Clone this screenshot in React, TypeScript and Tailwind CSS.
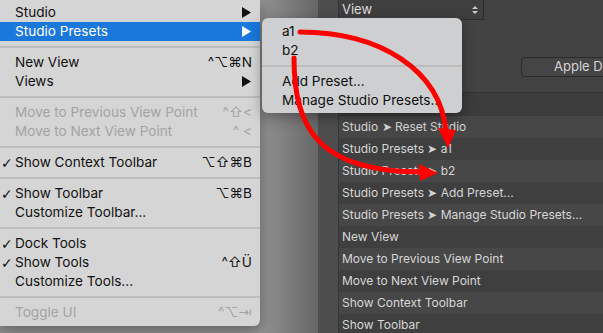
import React from 'react';

type Item =
  | { sep: true }
  | { sep?: false; label: string; shortcut?: string; sub?: boolean; check?: boolean; disabled?: boolean; active?: boolean };

const menuItems: Item[] = [
  { label: 'Studio', sub: true },
  { label: 'Studio Presets', sub: true, active: true },
  { sep: true },
  { label: 'New View', shortcut: '^⌥⌘N' },
  { label: 'Views', sub: true },
  { sep: true },
  { label: 'Move to Previous View Point', shortcut: '^⇧<', disabled: true },
  { label: 'Move to Next View Point', shortcut: '^ <', disabled: true },
  { sep: true },
  { label: 'Show Context Toolbar', shortcut: '⌥⇧⌘B', check: true },
  { sep: true },
  { label: 'Show Toolbar', shortcut: '⌥⌘B', check: true },
  { label: 'Customize Toolbar...' },
  { sep: true },
  { label: 'Dock Tools', check: true },
  { label: 'Show Tools', shortcut: '^⇧Ü', check: true },
  { label: 'Customize Tools...' },
  { sep: true },
  { label: 'Toggle UI', shortcut: '^⌥⇥', disabled: true },
];

const listRows = [
  'Studio ➤ Reset Studio',
  'Studio Presets ➤ a1',
  'Studio Presets ➤ b2',
  'Studio Presets ➤ Add Preset...',
  'Studio Presets ➤ Manage Studio Presets...',
  'New View',
  'Move to Previous View Point',
  'Move to Next View Point',
  'Show Context Toolbar',
  'Show Toolbar',
];

function SubArrow({ white }: { white?: boolean }) {
  return (
    <svg width="9" height="11" viewBox="0 0 9 11" className="mr-[9px]">
      <path d="M0 0 L9 5.5 L0 11 Z" fill={white ? '#ffffff' : '#111111'} />
    </svg>
  );
}

function Separator() {
  return (
    <div className="h-3 flex items-center">
      <div className="w-full h-[2px] bg-[#bdbdbd]" />
    </div>
  );
}

export default function App() {
  return (
    <div className="relative w-[603px] h-[333px] overflow-hidden flex font-['Inter',sans-serif]">
      {/* background app */}
      <div className="w-[318px] shrink-0 h-full bg-[linear-gradient(to_right,#929292_82%,#666666)]" />
      <div className="w-[20px] shrink-0 h-full bg-[#4d4d4d]" />
      <div className="flex-1 min-w-0 h-full flex flex-col overflow-hidden bg-[#434343] border-l border-[#353535]">
        <div className="h-[93px] shrink-0 flex flex-col border-b border-[#343434]">
          <div className="w-[145px] h-5 flex items-center justify-between pl-[3px] pr-[5px] bg-[#3f3f3f] border-r border-b border-[#2c2c2c]">
            <span className="text-[13px] text-[#dedede]">View</span>
            <svg width="6" height="10" viewBox="0 0 6 10">
              <path d="M0 4 L3 1 L6 4 Z M0 6 L3 9 L6 6 Z" fill="#c8c8c8" />
            </svg>
          </div>
          <div className="mt-[37px] ml-[182px] w-[100px] shrink-0 h-5 flex items-center pl-8 rounded-[4px] border border-[#2a2a2a] bg-[#454545]">
            <span className="text-[13px] text-[#d4d4d4] whitespace-nowrap">Apple De</span>
          </div>
        </div>
        <div className="h-[23px] shrink-0 bg-[#3c3c3c]" />
        {listRows.map((r, i) => (
          <div
            key={r}
            className={`h-[22px] shrink-0 flex items-center pl-[3px] text-[12px] text-[#d6d6d6] whitespace-nowrap ${
              i % 2 === 0 ? 'bg-[#474747]' : 'bg-[#3f3f3f]'
            }`}
          >
            {r}
          </div>
        ))}
      </div>

      {/* main menu */}
      <div className="absolute left-0 top-0 w-[260px] pt-[3px] pb-1 bg-[#d5d5d5] rounded-br-[6px] shadow-[0_4px_14px_rgba(0,0,0,0.35)] text-[13.6px]">
        {menuItems.map((it, i) =>
          it.sep ? (
            <Separator key={i} />
          ) : (
            <div
              key={i}
              className={`h-[19px] flex items-center ${
                it.active ? 'bg-[#1a78dc] text-white' : it.disabled ? 'text-[#a3a3a3]' : 'text-[#111111]'
              }`}
            >
              <span className="w-[15px] pl-[1px] text-[14px] leading-none font-['DejaVu_Sans',sans-serif]">
                {it.check ? '✓' : ''}
              </span>
              <span className="flex-1 whitespace-nowrap">{it.label}</span>
              {it.shortcut && <span className="pr-[8px] whitespace-nowrap">{it.shortcut}</span>}
              {it.sub && <SubArrow white={it.active} />}
            </div>
          )
        )}
      </div>

      {/* submenu */}
      <div className="absolute left-[262px] top-[18px] w-[200px] pt-1 pb-[3px] bg-[#cecfd0] rounded-[6px] shadow-[0_4px_14px_rgba(0,0,0,0.35)] text-[13.6px] text-[#111111]">
        <div className="h-[19px] flex items-center pl-5">a1</div>
        <div className="h-[19px] flex items-center pl-5">b2</div>
        <Separator />
        <div className="h-[19px] flex items-center pl-5">Add Preset...</div>
        <div className="h-[19px] flex items-center pl-5">Manage Studio Presets...</div>
      </div>

      {/* annotation arrows */}
      <svg className="absolute inset-0 pointer-events-none" width="603" height="333" viewBox="0 0 603 333">
        <path d="M300 32 C 380 32, 440 70, 446 131" fill="none" stroke="#ff0000" strokeWidth="5" strokeLinecap="round" />
        <path d="M438 128 L456 130 L448 148 Z" fill="#ff0000" />
        <path d="M294 58 C 294 130, 320 172, 422 172" fill="none" stroke="#ff0000" strokeWidth="5" strokeLinecap="round" />
        <path d="M419 164 L438 173 L420 181 Z" fill="#ff0000" />
      </svg>
    </div>
  );
}
